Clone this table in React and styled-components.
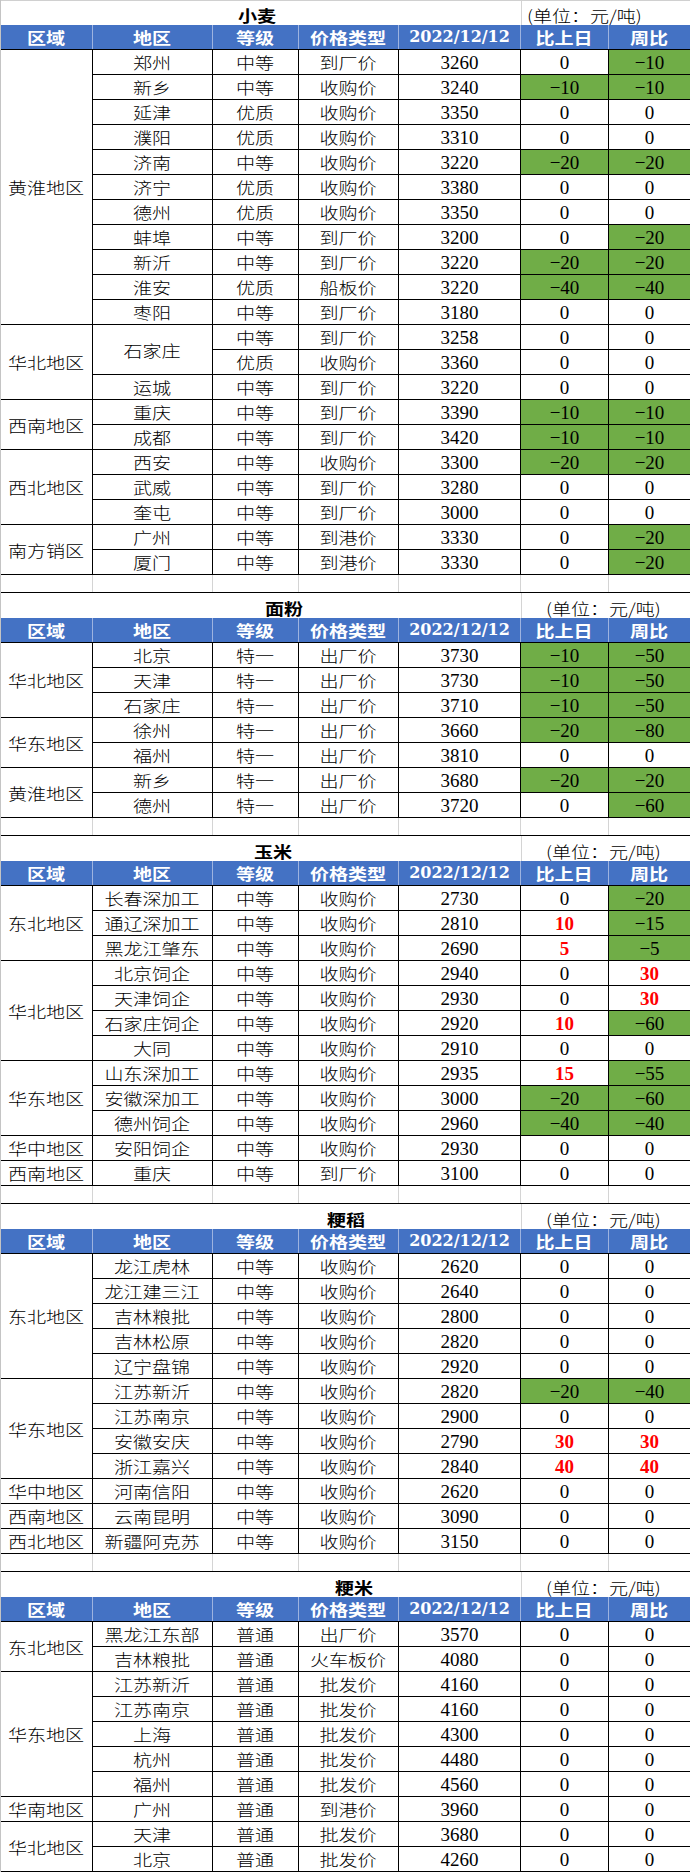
import React from 'react';
import styled, { createGlobalStyle } from 'styled-components';

const COLS = '92px 120px 86px 100px 122px 88px 81px';

const GlobalStyle = createGlobalStyle`
  html, body { margin: 0; padding: 0; background: #fff; }
  body { font-family: "Noto Sans CJK SC", sans-serif; }
  *, *::before, *::after { box-sizing: border-box; }
`;

const Sheet = styled.div`
  width: 690px;
  border-left: 1px solid #c4c4c4;
  background: #fff;
`;

const Txt = styled.span`
  display: inline-block;
  font-family: ${p => (p.$num ? '"Liberation Serif", "DejaVu Serif", serif' : '"Noto Sans CJK SC", sans-serif')};
  font-size: ${p => (p.$num ? '19px' : '16px')};
  line-height: 1;
  white-space: nowrap;
  font-weight: ${p => (p.$bold ? 700 : p.$num ? 400 : 300)};
  transform: ${p => (p.$num ? 'none' : 'scaleX(1.19)')};
  transform-origin: ${p => p.$origin || 'center'};
`;

const HeadNum = styled.span`
  display: inline-block;
  font-family: "DejaVu Serif", "Liberation Serif", serif;
  font-size: 16px;
  font-weight: 700;
  line-height: 1;
  white-space: nowrap;
`;

const TitleRow = styled.div`
  display: grid;
  grid-template-columns: 520px 169px;
  height: 25px;
  border-top: ${p => (p.$first ? '1px solid #d0d0d0' : 'none')};
`;

const TitleCell = styled.div`
  display: flex;
  align-items: center;
  padding-top: 4px;
  color: #000;
`;

const TitleText = styled(Txt)`
  width: 60px;
  text-align: center;
  margin-left: ${p => p.$center - 31}px;
`;

const UnitCell = styled.div`
  display: flex;
  align-items: center;
  padding-top: 4px;
  padding-left: ${p => p.$pad}px;
  border-left: 1px solid #d4d4d4;
  color: #000;
`;

const HeaderRow = styled.div`
  display: grid;
  grid-template-columns: ${COLS};
  height: 25px;
  background: #4472c4;
  border-bottom: 1px solid #000;
`;

const HeaderCell = styled.div`
  display: flex;
  align-items: center;
  justify-content: center;
  color: #fff;
  border-right: ${p => (p.$last ? 'none' : '1px solid #9db3e0')};
`;

const Body = styled.div`
  display: grid;
  grid-template-columns: ${COLS};
  grid-auto-rows: 25px;
`;

const Cell = styled.div`
  display: flex;
  align-items: center;
  justify-content: center;
  border-right: ${p => (p.$last ? 'none' : '1px solid #000')};
  border-bottom: 1px solid #000;
  background: ${p => (p.$fill ? '#70ad47' : 'transparent')};
  color: ${p => (p.$hot ? '#ff0000' : '#000')};
  grid-row: ${p => (p.$span ? `span ${p.$span}` : 'auto')};
`;

const BlankRow = styled.div`
  display: grid;
  grid-template-columns: ${COLS};
  height: 18px;
  border-bottom: 1px solid #000;
`;

const BlankCell = styled.div`
  border-right: ${p => (p.$last ? 'none' : '1px solid #d4d4d4')};
`;

const HEAD = ['区域', '地区', '等级', '价格类型', '2022/12/12', '比上日', '周比'];

const sections = [
  {
    title: '小麦', center: 257, unitPad: 5,
    groups: [
      { region: '黄淮地区', rows: [
        ['郑州', '中等', '到厂价', 3260, 0, -10],
        ['新乡', '中等', '收购价', 3240, -10, -10],
        ['延津', '优质', '收购价', 3350, 0, 0],
        ['濮阳', '优质', '收购价', 3310, 0, 0],
        ['济南', '中等', '收购价', 3220, -20, -20],
        ['济宁', '优质', '收购价', 3380, 0, 0],
        ['德州', '优质', '收购价', 3350, 0, 0],
        ['蚌埠', '中等', '到厂价', 3200, 0, -20],
        ['新沂', '中等', '到厂价', 3220, -20, -20],
        ['淮安', '优质', '船板价', 3220, -40, -40],
        ['枣阳', '中等', '到厂价', 3180, 0, 0],
      ] },
      { region: '华北地区', rows: [
        ['石家庄', '中等', '到厂价', 3258, 0, 0, 2],
        [null, '优质', '收购价', 3360, 0, 0],
        ['运城', '中等', '到厂价', 3220, 0, 0],
      ] },
      { region: '西南地区', rows: [
        ['重庆', '中等', '到厂价', 3390, -10, -10],
        ['成都', '中等', '到厂价', 3420, -10, -10],
      ] },
      { region: '西北地区', rows: [
        ['西安', '中等', '收购价', 3300, -20, -20],
        ['武威', '中等', '到厂价', 3280, 0, 0],
        ['奎屯', '中等', '到厂价', 3000, 0, 0],
      ] },
      { region: '南方销区', rows: [
        ['广州', '中等', '到港价', 3330, 0, -20],
        ['厦门', '中等', '到港价', 3330, 0, -20],
      ] },
    ],
  },
  {
    title: '面粉', center: 284, unitPad: 24,
    groups: [
      { region: '华北地区', rows: [
        ['北京', '特一', '出厂价', 3730, -10, -50],
        ['天津', '特一', '出厂价', 3730, -10, -50],
        ['石家庄', '特一', '出厂价', 3710, -10, -50],
      ] },
      { region: '华东地区', rows: [
        ['徐州', '特一', '出厂价', 3660, -20, -80],
        ['福州', '特一', '出厂价', 3810, 0, 0],
      ] },
      { region: '黄淮地区', rows: [
        ['新乡', '特一', '出厂价', 3680, -20, -20],
        ['德州', '特一', '出厂价', 3720, 0, -60],
      ] },
    ],
  },
  {
    title: '玉米', center: 273, unitPad: 24,
    groups: [
      { region: '东北地区', rows: [
        ['长春深加工', '中等', '收购价', 2730, 0, -20],
        ['通辽深加工', '中等', '收购价', 2810, 10, -15],
        ['黑龙江肇东', '中等', '收购价', 2690, 5, -5],
      ] },
      { region: '华北地区', rows: [
        ['北京饲企', '中等', '收购价', 2940, 0, 30],
        ['天津饲企', '中等', '收购价', 2930, 0, 30],
        ['石家庄饲企', '中等', '收购价', 2920, 10, -60],
        ['大同', '中等', '收购价', 2910, 0, 0],
      ] },
      { region: '华东地区', rows: [
        ['山东深加工', '中等', '收购价', 2935, 15, -55],
        ['安徽深加工', '中等', '收购价', 3000, -20, -60],
        ['德州饲企', '中等', '收购价', 2960, -40, -40],
      ] },
      { region: '华中地区', rows: [
        ['安阳饲企', '中等', '收购价', 2930, 0, 0],
      ] },
      { region: '西南地区', rows: [
        ['重庆', '中等', '到厂价', 3100, 0, 0],
      ] },
    ],
  },
  {
    title: '粳稻', center: 346, unitPad: 24,
    groups: [
      { region: '东北地区', rows: [
        ['龙江虎林', '中等', '收购价', 2620, 0, 0],
        ['龙江建三江', '中等', '收购价', 2640, 0, 0],
        ['吉林粮批', '中等', '收购价', 2800, 0, 0],
        ['吉林松原', '中等', '收购价', 2820, 0, 0],
        ['辽宁盘锦', '中等', '收购价', 2920, 0, 0],
      ] },
      { region: '华东地区', rows: [
        ['江苏新沂', '中等', '收购价', 2820, -20, -40],
        ['江苏南京', '中等', '收购价', 2900, 0, 0],
        ['安徽安庆', '中等', '收购价', 2790, 30, 30],
        ['浙江嘉兴', '中等', '收购价', 2840, 40, 40],
      ] },
      { region: '华中地区', rows: [
        ['河南信阳', '中等', '收购价', 2620, 0, 0],
      ] },
      { region: '西南地区', rows: [
        ['云南昆明', '中等', '收购价', 3090, 0, 0],
      ] },
      { region: '西北地区', rows: [
        ['新疆阿克苏', '中等', '收购价', 3150, 0, 0],
      ] },
    ],
  },
  {
    title: '粳米', center: 354, unitPad: 24,
    groups: [
      { region: '东北地区', rows: [
        ['黑龙江东部', '普通', '出厂价', 3570, 0, 0],
        ['吉林粮批', '普通', '火车板价', 4080, 0, 0],
      ] },
      { region: '华东地区', rows: [
        ['江苏新沂', '普通', '批发价', 4160, 0, 0],
        ['江苏南京', '普通', '批发价', 4160, 0, 0],
        ['上海', '普通', '批发价', 4300, 0, 0],
        ['杭州', '普通', '批发价', 4480, 0, 0],
        ['福州', '普通', '批发价', 4560, 0, 0],
      ] },
      { region: '华南地区', rows: [
        ['广州', '普通', '到港价', 3960, 0, 0],
      ] },
      { region: '华北地区', rows: [
        ['天津', '普通', '批发价', 3680, 0, 0],
        ['北京', '普通', '批发价', 4260, 0, 0],
      ] },
    ],
  },
];

function Change({ v, last }) {
  const neg = v < 0;
  const pos = v > 0;
  const text = neg ? `\u2212${Math.abs(v)}` : String(v);
  return (
    <Cell $fill={neg} $hot={pos} $last={last}>
      <Txt $num $bold={pos}>{text}</Txt>
    </Cell>
  );
}

function Section({ s, first, last }) {
  return (
    <>
      <TitleRow $first={first}>
        <TitleCell>
          <TitleText $bold $center={s.center}>{s.title}</TitleText>
        </TitleCell>
        <UnitCell $pad={s.unitPad}>
          <Txt $origin="left center">(单位：元/吨)</Txt>
        </UnitCell>
      </TitleRow>
      <HeaderRow>
        {HEAD.map((h, i) => (
          <HeaderCell key={h} $last={i === HEAD.length - 1}>
            {i === 4 ? <HeadNum>{h}</HeadNum> : <Txt $bold>{h}</Txt>}
          </HeaderCell>
        ))}
      </HeaderRow>
      <Body>
        {s.groups.map(g => (
          <React.Fragment key={g.region + g.rows[0][0]}>
            <Cell $span={g.rows.length}>
              <Txt>{g.region}</Txt>
            </Cell>
            {g.rows.map((r, ri) => (
              <React.Fragment key={ri}>
                {r[0] !== null && (
                  <Cell $span={r[6] || 0}>
                    <Txt>{r[0]}</Txt>
                  </Cell>
                )}
                <Cell><Txt>{r[1]}</Txt></Cell>
                <Cell><Txt>{r[2]}</Txt></Cell>
                <Cell><Txt $num>{r[3]}</Txt></Cell>
                <Change v={r[4]} />
                <Change v={r[5]} last />
              </React.Fragment>
            ))}
          </React.Fragment>
        ))}
      </Body>
      {!last && (
        <BlankRow>
          {HEAD.map((h, i) => (
            <BlankCell key={h} $last={i === HEAD.length - 1} />
          ))}
        </BlankRow>
      )}
    </>
  );
}

export default function App() {
  return (
    <>
      <GlobalStyle />
      <Sheet>
        {sections.map((s, i) => (
          <Section key={s.title} s={s} first={i === 0} last={i === sections.length - 1} />
        ))}
      </Sheet>
    </>
  );
}
